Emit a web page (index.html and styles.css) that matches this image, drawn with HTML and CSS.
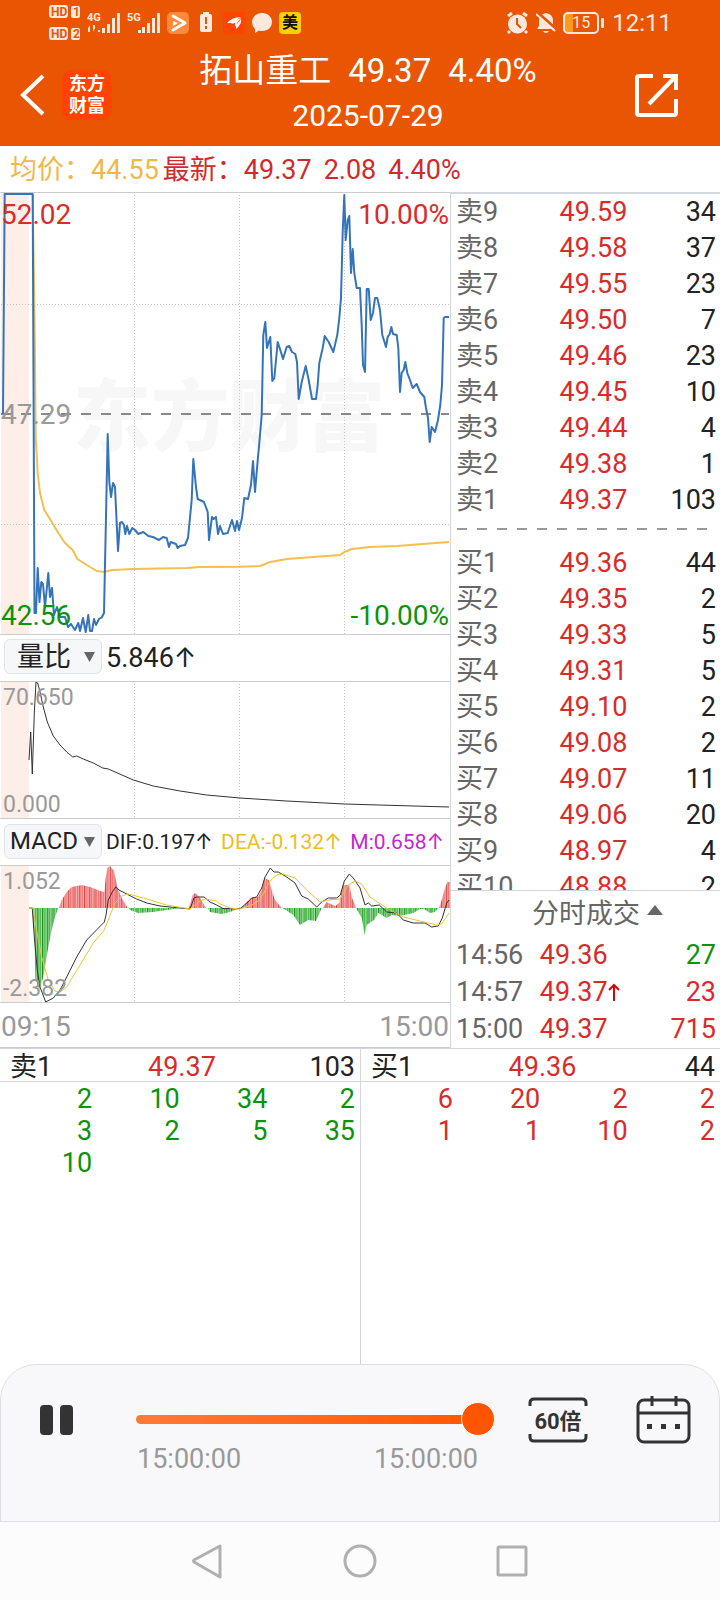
FILE: index.html
```html
<!DOCTYPE html>
<html lang="zh-CN">
<head>
<meta charset="utf-8">
<meta name="viewport" content="width=device-width, initial-scale=1">
<title>拓山重工 分时回放</title>
<link rel="stylesheet" href="styles.css">
</head>
<body>
<div class="app">
  <header class="top">
    <div class="status">
      <div class="status-left">
        <svg width="32" height="36" viewBox="0 0 32 36"><g fill="#ffe9df"><rect x="0" y="0" width="19" height="13" rx="3"/><rect x="22" y="1" width="9" height="12" rx="2"/><rect x="0" y="22" width="19" height="13" rx="3"/><rect x="22" y="23" width="9" height="12" rx="2"/></g><g class="tiny-dark"><text x="2" y="11">HD</text><text x="24" y="11">1</text><text x="2" y="33">HD</text><text x="24" y="33">2</text></g></svg>
        <svg width="34" height="22" viewBox="0 0 34 22"><text class="tiny-light" x="0" y="9">4G</text><g fill="#ffe9df"><path d="M3 13v7h-2v-4zM6 20v-7h2v3zM11 18h2v2h-2zM15 16h3v5h-3zM20 12h3v9h-3zM25 6h3v15h-3zM30 1h3v20h-3z"/></g></svg>
        <svg width="34" height="22" viewBox="0 0 34 22"><text class="tiny-light" x="0" y="9">5G</text><g fill="#ffe9df"><path d="M11 18h3v3h-3zM15 15h3v6h-3zM20 11h3v10h-3zM25 6h3v15h-3zM30 1h3v20h-3z"/></g></svg>
        <svg width="22" height="22" viewBox="0 0 22 22"><rect width="22" height="22" rx="5" fill="#ff8a3c"/><path d="M6 4l12 7-12 7" fill="none" stroke="#fff" stroke-width="3" stroke-linejoin="round" stroke-linecap="round"/><path d="M6 9l5 2-5 3z" fill="#fff"/></svg>
        <svg width="12" height="22" viewBox="0 0 12 22"><path d="M3 0h6v2h1q2 0 2 2v14q0 2-2 2H2q-2 0-2-2V4q0-2 2-2h1z" fill="#ffe9df"/><path d="M5 5h2v7H5zM5 14h2v3H5z" fill="#ea5504"/></svg>
        <svg width="22" height="22" viewBox="0 0 22 22"><rect width="22" height="22" fill="#ff4400"/><path d="M4 11q5-6 14-6-5 2-7 6zM8 12q5-5 10-6-4 4-6 9v-4zM13 17v-4q3-3 5-6 1 5-5 10z" fill="#fff"/></svg>
        <svg width="22" height="20" viewBox="0 0 22 20"><path d="M11 0c6 0 10 4 10 9s-4 9-10 9q-2 0-3-.5L4 20v-4Q1 13 1 9c0-5 4-9 10-9z" fill="#ffe9df"/></svg>
        <span class="mei">美</span>
      </div>
      <div class="status-right">
        <svg width="23" height="22" viewBox="0 0 23 22"><circle cx="11.500" cy="12" r="9.500" fill="#ffe9df"/><path d="M2 4l4-3M21 4l-4-3M4 19l-2 2M19 19l2 2" stroke="#ffe9df" stroke-width="3"/><path d="M11 6v6l4 4" stroke="#ea5504" stroke-width="2" fill="none"/></svg>
        <svg width="20" height="22" viewBox="0 0 20 22"><path d="M10 1q7 1 7 8v5l2 3H1l2-3V9q0-7 7-8zM7 19h6q-1 2-3 2t-3-2z" fill="#ffe9df"/><path d="M1 0l19 17" stroke="#ea5504" stroke-width="3"/><path d="M0 2l19 17" stroke="#ffe9df" stroke-width="2"/></svg>
        <span class="battery">15</span>
        <span class="clock">12:11</span>
      </div>
    </div>
    <div class="titlebar">
      <div class="title-left">
        <button class="icon-btn" aria-label="返回"><svg width="25" height="42" viewBox="0 0 25 42"><path d="M23 2L3 21l20 19" fill="none" stroke="#fff" stroke-width="4"/></svg></button>
        <div class="logo">东方<br>财富</div>
      </div>
      <div class="title-mid">
        <h1><span>拓山重工</span><span>49.37</span><span>4.40%</span></h1>
        <p>2025-07-29</p>
      </div>
      <button class="icon-btn share" aria-label="分享"><svg width="44" height="44" viewBox="0 0 44 44"><path d="M18 3H4q-2 0-2 2v35q0 2 2 2h35q2 0 2-2V26M28 3h13v14M41 3L14 31" fill="none" stroke="#fff" stroke-width="4"/></svg></button>
    </div>
  </header>

  <div class="info"><span class="avg">均价：44.55</span><span class="latest">最新：49.37</span><span class="delta">2.08</span><span class="delta">4.40%</span></div>

  <main class="board">
    <section class="charts">
      <div class="chart price">
        <div class="watermark" aria-hidden="true">东方财富</div>
        <svg viewBox="0 193 450 441" preserveAspectRatio="none">
          <rect class="pre" x="1" y="192" width="28" height="442"/>
          <path class="grid" d="M134.500 192V634M239.500 192V634M344.500 192V634M1 304.500H449M1 524.500H449"/>
          <path class="mid" d="M1 414H449"/>
          <polyline class="avg-line" points="32.700,194 34.700,332 35.700,437 37.700,473 40,493 44.300,510 50,519 58.300,533 65,543 72.700,550 77.300,559 86.700,565 96.700,571 104.300,572 112,570 133,569 187,568 200,567 240,566.700 260,566 270,562 287,559 340,555 345,551.700 352,549 370,547 397,546 449,542"/>
          <polyline class="price-line" points="3,414 4.700,194 32.700,194 34.500,613 36,613 37.700,568 39.500,602 41.300,582 43,584 45,607 48.300,573 50,597 52,588 54,615 57,607 60,617 65,617 68,627 71,624 75,630 78.300,623 80,631 83,618 85.700,632 88.300,615 90,631 92,631 94,619 96,625 99,619 101.700,617.500 104,613 107.700,434 109.300,482 111,497 113,483 115,487 118,551 120,523 122,522 124,525 125.300,534 127,526 129.300,534 132.300,528 135,530 138.300,534 143.300,532 148.300,536 153,537 159,540 163,537 166.700,538 169,547 170.700,542 176,544 177.700,548 180,546 185,545 188,538 191.700,500 193.300,459 196,487 197.700,499 204,502 207.700,512 209,540 212,517 213.700,519 216,517 218,534 220,526 223,534 227.700,533 232,520 235,531 237,521 239,530 242,518 244.300,498 248,499 251,485 253,461 255,492 258,457 259.300,443 261.700,415 263.300,335 265.300,322 267,348 270.300,337 272.300,381 274.300,378 277.700,342 280.300,350 283,359 286.700,347 289.300,346 292,352 295.300,354 297,362 298.700,399 301.700,382 305.700,366 308.700,380 312,399 316,399 317.700,385 319.300,363 322.700,348 324.700,336 328.700,342 333.300,352 337.300,335 339.300,318 341,298 342.700,232 344.300,195 345.700,240 347.700,220 349.300,216 351,273 352.700,249 354.300,273 356.700,288 360,288 361.700,325 363,365 365,372 366.700,289 368.700,289 370.700,320 373,313 375,298 377.300,298 380,310 382.300,335 386,347 387.700,337 389.700,334 391.300,327 393,334 396.700,335 398.300,348 400,392 401.700,373 403.700,370 405.300,362 407.300,373 410,380 412.700,388 416.700,384 420,392 424.300,397 426,408 428,418 429.700,442 431.700,427 435,432 438,420 440.300,405 442,385 443.700,318 445,317 449,317"/>
        </svg>
        <span class="lab tl red">52.02</span><span class="lab tr red">10.00%</span>
        <span class="lab ml grey">47.29</span>
        <span class="lab bl green">42.56</span><span class="lab br green">-10.00%</span>
      </div>

      <div class="bar">
        <label class="picker"><select aria-label="副图指标一"><option>量比</option></select><svg width="11" height="10" viewBox="0 0 11 10"><path d="M0 0h11L5.500 10z" fill="#666"/></svg></label>
        <span class="big">5.846<i>↑</i></span>
      </div>

      <div class="chart sub">
        <svg viewBox="0 682 450 136" preserveAspectRatio="none">
          <rect class="pre" x="1" y="681" width="28" height="137"/>
          <path class="grid" d="M134.500 681V818M239.500 681V818M344.500 681V818"/>
          <polyline class="dark-line" points="29,760 30.700,732 32.300,774 34.300,713 36,682 37.700,683 40,692 43.300,707 47.300,722 53.300,736 60,745 66.700,752 72.700,757 76.700,756 83.300,759 93.300,763 102.700,768 108.300,769 133.300,780 153.300,786 180,791 206.700,795 240,798 286.700,801 344.300,804 449,807"/>
        </svg>
        <span class="lab tl small grey">70.650</span><span class="lab bl small grey">0.000</span>
      </div>

      <div class="bar">
        <label class="picker narrow"><select aria-label="副图指标二"><option>MACD</option></select><svg width="11" height="10" viewBox="0 0 11 10"><path d="M0 0h11L5.500 10z" fill="#666"/></svg></label>
        <div class="macd"><span>DIF:0.197<i>↑</i></span><span class="gold">DEA:-0.132<i>↑</i></span><span class="violet">M:0.658<i>↑</i></span></div>
      </div>

      <div class="chart sub">
        <svg viewBox="0 866 450 136" preserveAspectRatio="none">
          <defs>
            <pattern id="up" width="5.250" height="200" patternUnits="userSpaceOnUse"><rect width="5.250" height="200" fill="#ffc4c4"/><path d="M.600 0V200" stroke="#b84545" stroke-width="1.100"/><path d="M2.300 0V200M4 0V200" stroke="#ff6e6e" stroke-width="1.100"/></pattern>
            <pattern id="down" width="5.250" height="200" patternUnits="userSpaceOnUse"><rect width="5.250" height="200" fill="#bdeabd"/><path d="M.600 0V200" stroke="#18811e" stroke-width="1.100"/><path d="M2.300 0V200M4 0V200" stroke="#41bd41" stroke-width="1.100"/></pattern>
          </defs>
          <rect class="pre" x="1" y="865" width="28" height="137"/>
          <path class="grid" d="M134.500 865V1002M239.500 865V1002M344.500 865V1002"/>
          <path fill="url(#up)" d="M59 908L61.700 900 66.700 892 71.700 887 81.700 885 90 887 100 891 104.300 892 105.700 878 107.300 868 110 866 114 871 117.300 887 121.700 898 127.700 908ZM189 908L192.700 895 195.300 893 200 898 206 908ZM241.700 908L246.700 902 251.700 898 258 897 261.700 890 264.300 878 269 880 272.300 892 275 900 281.700 908ZM322.700 908L326.700 902 335 906 339.300 903 342.700 885 349.300 885 351.700 897 355 905 356 908ZM439 908L441.700 900 445 888 447.300 882H450V908Z"/>
          <path fill="url(#down)" d="M32 908L34.300 933 35.300 978 39.300 990 43.300 977 48.300 947 51.700 930 55 917 58.300 908ZM129 908L130 910 138 913 153 912 167 910 180 908ZM208 908L210 912 221.700 914 230 912 240 908ZM282.700 908L293.300 915 300 925 308.300 920 316 921 320 912 321.700 908ZM356 908L361.700 918 364.700 935 366.700 925 374 920 378.300 913 386.700 918 391.700 915 400 916 413.300 913 420 909 424 909 430 913 435 912 438.300 908Z"/>
          <polyline class="dark-line" points="29,908 32.300,908 34.300,937 37.300,970 40,987 45.700,1002 53.300,998 60,990 66.700,977 76.700,957 86.700,940 104.300,922 106,915 108.300,900 111.700,893 115.700,887 119,890 126.700,894 136.700,899 146.700,903 160,906 190,909 194,898 196.700,897 204,897 210,902 216.700,905 223,908.500 240,908.700 248,902 251.700,898 256.700,897 261.700,888 265,877 270.300,868 274,872 278.300,872 286.700,877 295,883 301.700,896 308.300,899 316.700,907 321.700,902 328.300,898 336.700,898 340.300,895 344.300,881 349.300,874 353.300,878 360,888 365,905 368.300,903 371.700,906 379.300,905 386.700,912 396.700,913 403.300,920 413.300,923 425,923 431.700,927 438.300,926 442.300,918 446.700,903 449,900"/>
          <polyline class="gold-line" points="29,908 33,908 35.300,923 41.700,957 48.300,980 55,991 60,992 66.700,987 80,965 93.300,943 104.300,930 108.300,920 115,903 121.700,896 128.300,894 140,897 166.700,905 190,909 200,901 205.700,899 216.700,901 220,904 230,908 240,909 251.700,905 260,900 270,881 276.700,875 283.300,874 295,878 306.700,890 320,902 328.300,900 340,899 348.300,885 355,881 361.700,884 370,897 386.700,908 403.300,917 420,921 436.700,925 441.700,924 449,913"/>
        </svg>
        <span class="lab tl small grey">1.052</span><span class="lab bl small grey">-2.382</span>
      </div>
      <div class="axis"><span>09:15</span><span>15:00</span></div>
    </section>

    <section class="quotes">
      <table class="levels">
        <tr><th>卖9</th><td>49.59</td><td>34</td></tr>
        <tr><th>卖8</th><td>49.58</td><td>37</td></tr>
        <tr><th>卖7</th><td>49.55</td><td>23</td></tr>
        <tr><th>卖6</th><td>49.50</td><td>7</td></tr>
        <tr><th>卖5</th><td>49.46</td><td>23</td></tr>
        <tr><th>卖4</th><td>49.45</td><td>10</td></tr>
        <tr><th>卖3</th><td>49.44</td><td>4</td></tr>
        <tr><th>卖2</th><td>49.38</td><td>1</td></tr>
        <tr><th>卖1</th><td>49.37</td><td>103</td></tr>
      </table>
      <div class="split"></div>
      <div class="buys">
        <table class="levels">
          <tr><th>买1</th><td>49.36</td><td>44</td></tr>
          <tr><th>买2</th><td>49.35</td><td>2</td></tr>
          <tr><th>买3</th><td>49.33</td><td>5</td></tr>
          <tr><th>买4</th><td>49.31</td><td>5</td></tr>
          <tr><th>买5</th><td>49.10</td><td>2</td></tr>
          <tr><th>买6</th><td>49.08</td><td>2</td></tr>
          <tr><th>买7</th><td>49.07</td><td>11</td></tr>
          <tr><th>买8</th><td>49.06</td><td>20</td></tr>
          <tr><th>买9</th><td>48.97</td><td>4</td></tr>
          <tr><th>买10</th><td>48.88</td><td>2</td></tr>
        </table>
      </div>
      <div class="trades">
        <button class="trades-head">分时成交<svg width="16" height="10" viewBox="0 0 16 10"><path d="M8 0l8 10H0z" fill="#666"/></svg></button>
        <table>
          <tr><th>14:56</th><td>49.36</td><td class="green">27</td></tr>
          <tr><th>14:57</th><td>49.37<svg width="12" height="18" viewBox="0 0 12 18"><path d="M6 18V2M1 7l5-5 5 5" fill="none" stroke="#d00" stroke-width="2"/></svg></td><td>23</td></tr>
          <tr><th>15:00</th><td>49.37</td><td>715</td></tr>
        </table>
      </div>
    </section>
  </main>

  <section class="orders">
    <div class="side">
      <div class="side-head"><span>卖1</span><span class="red">49.37</span><span>103</span></div>
      <table class="green">
        <tr><td>2</td><td>10</td><td>34</td><td>2</td></tr>
        <tr><td>3</td><td>2</td><td>5</td><td>35</td></tr>
        <tr><td>10</td><td></td><td></td><td></td></tr>
      </table>
    </div>
    <div class="side">
      <div class="side-head"><span>买1</span><span class="red">49.36</span><span>44</span></div>
      <table class="red">
        <tr><td>6</td><td>20</td><td>2</td><td>2</td></tr>
        <tr><td>1</td><td>1</td><td>10</td><td>2</td></tr>
      </table>
    </div>
  </section>

  <section class="player">
    <button class="icon-btn" aria-label="暂停"><svg width="33" height="48" viewBox="0 0 33 48"><rect x="0" y="9" width="13" height="30" rx="4" fill="#333"/><rect x="20" y="9" width="13" height="30" rx="4" fill="#333"/></svg></button>
    <div class="seek">
      <input type="range" min="0" max="100" value="100" aria-label="回放进度">
      <div class="times"><span>15:00:00</span><span>15:00:00</span></div>
    </div>
    <button class="icon-btn speed"><svg width="60" height="48" viewBox="0 0 60 48" aria-hidden="true"><path d="M2 10V7q0-4 4-4h48q4 0 4 4v3M2 38v3q0 4 4 4h48q4 0 4-4v-3" fill="none" stroke="#333" stroke-width="3"/></svg><span>60倍</span></button>
    <button class="icon-btn" aria-label="选择日期"><svg width="55" height="48" viewBox="0 0 55 48"><g fill="none" stroke="#333" stroke-width="3"><rect x="2" y="4" width="51" height="42" rx="6"/><path d="M2 17h51M16 0v10M40 0v10"/></g><path d="M11 28h5v5h-5zM25 28h5v5h-5zM39 28h5v5h-5z" fill="#333"/></svg></button>
  </section>

  <nav class="sysnav">
    <button class="icon-btn" aria-label="系统返回"><svg width="36" height="36" viewBox="0 0 36 36"><path d="M30 3v31L4 19q-1-1 0-2z" fill="none" stroke="#b0b0b0" stroke-width="3" stroke-linejoin="round"/></svg></button>
    <button class="icon-btn" aria-label="主屏幕"><svg width="36" height="36" viewBox="0 0 36 36"><circle cx="18" cy="18" r="15" fill="none" stroke="#b0b0b0" stroke-width="3"/></svg></button>
    <button class="icon-btn" aria-label="最近任务"><svg width="36" height="36" viewBox="0 0 36 36"><rect x="4" y="4" width="28" height="28" rx="1" fill="none" stroke="#b0b0b0" stroke-width="3"/></svg></button>
  </nav>
</div>
</body>
</html>
```
FILE: styles.css
```css
* { box-sizing: border-box; }
body {
  margin: 0;
  background: #fff;
  color: #222;
  font: 27px/36px Roboto, "Noto Sans CJK SC", sans-serif;
}
.app { min-height: 100vh; display: flex; flex-direction: column; }
svg { display: block; flex: none; }
button, select { font: inherit; color: inherit; }
.icon-btn { display: block; padding: 0; border: 0; background: none; }
table { border-collapse: collapse; width: 100%; table-layout: fixed; }
th, td { padding: 0; font-weight: 400; white-space: nowrap; }
.red { color: #d82c2c; }
.green { color: #0c930c; }
.grey { color: #999; }
.gold { color: #ebbd27; }
.violet { color: #c526cb; }

/* header */
.top { background: #ea5504; color: #fff; }
.status {
  height: 46px;
  padding: 0 48px 0 49px;
  display: flex;
  align-items: center;
  justify-content: space-between;
  color: #ffe9df;
}
.status-left { display: flex; align-items: center; gap: 6px; }
.status-left svg:nth-child(4),
.status-left svg:nth-child(5) { margin-right: 5px; }
.status-right { display: flex; align-items: center; gap: 7px; }
.tiny-dark { font: 700 12px Roboto, sans-serif; fill: #ea5504; }
.tiny-light { font: 700 11px Roboto, sans-serif; fill: #ffe9df; }
.mei {
  width: 22px;
  height: 22px;
  border-radius: 4px;
  background: #ffd000;
  color: #111;
  font-weight: 700;
  font-size: 16px;
  line-height: 22px;
  text-align: center;
}
.battery {
  position: relative;
  width: 36px;
  height: 22px;
  margin-right: 6px;
  border: 2px solid #ffe9df;
  border-radius: 5px;
  background: linear-gradient(90deg, #ff9a1c 8px, transparent 8px);
  font-size: 16px;
  line-height: 18px;
  text-align: center;
}
.battery::after {
  content: "";
  position: absolute;
  right: -7px;
  top: 4px;
  width: 3px;
  height: 10px;
  border-radius: 1px;
  background: #ffe9df;
}
.clock { font-size: 24px; }
.titlebar {
  height: 100px;
  display: grid;
  grid-template-columns: 112px 1fr 96px;
}
.title-left { padding: 24px 0 0 20px; display: flex; align-items: flex-start; justify-content: space-between; }
.title-left .icon-btn { margin-top: 4px; }
.logo {
  width: 50px;
  height: 50px;
  padding-top: 3px;
  border-radius: 10px;
  background: #ff4400;
  font-size: 18px;
  font-weight: 700;
  line-height: 22px;
  text-align: center;
}
.title-mid { text-align: center; }
h1 {
  margin: 0;
  display: flex;
  justify-content: center;
  gap: 17px;
  font-size: 33px;
  font-weight: 400;
  line-height: 50px;
}
.title-mid p { margin: 0; font-size: 30px; line-height: 40px; }
.share { padding: 27px 0 0 11px; align-self: start; }

.info {
  height: 46px;
  padding-left: 10px;
  display: flex;
  gap: 4px;
  line-height: 48px;
  white-space: nowrap;
}
.avg { color: #f0b84a; }
.latest, .delta { color: #cf2b2e; }
.delta { margin-left: 8px; }

/* charts */
.board { display: grid; grid-template-columns: 5fr 3fr; }
.charts { min-width: 0; }
.chart { position: relative; border-top: 1px solid #ccc; border-bottom: 1px solid #ccc; }
.chart > svg { position: relative; width: 100%; height: 100%; }
.price { height: 443px; }
.sub { height: 138px; }
.pre { fill: #fdeee8; }
.grid { fill: none; stroke: #c4c4c4; stroke-width: 1; stroke-dasharray: 1 2; }
.mid { stroke: #888; stroke-width: 2; stroke-dasharray: 10 10; }
.avg-line, .price-line, .dark-line, .gold-line { fill: none; stroke-linejoin: round; vector-effect: non-scaling-stroke; }
.avg-line { stroke: #f3bf4f; stroke-width: 2; }
.price-line { stroke: #3574b8; stroke-width: 2; }
.dark-line { stroke: #333; stroke-width: 1; }
.gold-line { stroke: #ecc53a; stroke-width: 1; }
.watermark {
  position: absolute;
  inset: 10px 0 0 8px;
  display: grid;
  place-items: center;
  color: #f7f7f7;
  font-size: 78px;
  font-weight: 900;
  line-height: 80px;
}
.lab { position: absolute; font-size: 28px; line-height: 32px; }
.lab.small { font-size: 23px; }
.tl { left: 1px; top: 6px; }
.tr { right: 1px; top: 6px; }
.ml { left: 1px; top: 206px; }
.bl { left: 1px; bottom: 2px; }
.br { right: 1px; bottom: 2px; }
.small.tl { left: 3px; top: 0; }
.small.bl { left: 3px; bottom: -3px; }
.bar {
  height: 46px;
  padding-left: 4px;
  display: flex;
  align-items: center;
  gap: 4px;
  font-size: 21px;
  white-space: nowrap;
}
.bar i { font-family: Inter, sans-serif; font-style: normal; }
.macd { flex: 1; display: flex; justify-content: space-between; padding-right: 6px; }
.big { font-size: 27px; }
.picker { position: relative; width: 98px; flex: none; }
.picker select {
  width: 100%;
  height: 35px;
  padding: 0 18px 0 0;
  border: 1px solid #e0e3e8;
  border-radius: 6px;
  background: #f6f7f9;
  appearance: none;
  font-size: 27px;
  line-height: 32px;
  text-align-last: center;
}
.picker.narrow select { font-size: 24px; }
.bar .picker svg { position: absolute; right: 7px; top: 13px; pointer-events: none; }
.axis {
  height: 45px;
  padding: 0 1px 0 1px;
  display: flex;
  justify-content: space-between;
  border-bottom: 1px solid #ccc;
  color: #999;
  font-size: 28px;
  line-height: 47px;
}

/* order book */
.quotes {
  display: flex;
  flex-direction: column;
  border-left: 1px solid #d3d6dc;
  border-top: 2px solid #d3d6dc;
}
.levels th, .trades th { text-align: left; padding-left: 5px; color: #666; }
.levels td:nth-child(2), .trades td { color: #d82c2c; }
.levels th { width: 40%; }
.levels td:nth-child(2) { width: 30%; padding-left: 1px; }
.levels td:last-child, .trades td:last-child { text-align: right; padding-right: 4px; }
.trades td.green { color: #0c930c; }
.split {
  height: 27px;
  margin: 0 12px 0 6px;
  flex: none;
  background: repeating-linear-gradient(90deg, #999 0 10px, transparent 10px 20px) 0 10px / 100% 2px no-repeat;
}
.buys { flex: 1 1 0; height: 0; min-height: 0; overflow: hidden; }
.trades { border-top: 1px solid #d3d6dc; }
.trades-head {
  width: 100%;
  height: 46px;
  padding: 0 0 0 24px;
  border: 0;
  background: none;
  display: flex;
  align-items: center;
  justify-content: center;
  gap: 7px;
  color: #666;
}
.trades-head svg { margin-bottom: 8px; }
.trades table { line-height: 37px; }
.trades th { width: 33%; }
.trades td:nth-child(2) { width: 37%; }
.trades td svg { display: inline-block; }

/* matching order queues */
.orders { flex: 1; display: grid; grid-template-columns: 1fr 1fr; border-top: 1px solid #d3d6dc; }
.side + .side { border-left: 1px solid #d3d6dc; }
.side-head {
  height: 33px;
  padding: 0 5px 0 10px;
  display: grid;
  grid-template-columns: 40% 1fr auto;
  border-bottom: 1px solid #d3d6dc;
  line-height: 36px;
}
.side table { line-height: 32px; margin-top: 1px; }
.side td { text-align: right; padding-right: 5px; }
.side td:first-child { width: 27%; }

/* playback panel */
.player {
  height: 158px;
  padding: 31px 28px 0 39px;
  display: flex;
  align-items: flex-start;
  border: 1px solid #dedfe2;
  border-radius: 36px 36px 0 0;
  background: #f8f8fa;
}
.seek { flex: 1; margin: 7px 33px 0 63px; }
.seek input {
  display: block;
  width: 100%;
  height: 32px;
  margin: 0;
  appearance: none;
  background: none;
}
.seek input::-webkit-slider-runnable-track {
  height: 9px;
  border-radius: 5px;
  background: linear-gradient(90deg, #ff7a38, #ff5500);
}
.seek input::-webkit-slider-thumb {
  appearance: none;
  width: 34px;
  height: 34px;
  margin-top: -13px;
  border: 1px solid #fff;
  border-radius: 50%;
  background: #ff5500;
}
.times {
  padding: 8px 17px 0 1px;
  display: flex;
  justify-content: space-between;
  color: #999;
  line-height: 32px;
}
.speed { display: grid; place-items: center; margin-right: 48px; }
.speed > * { grid-area: 1 / 1; }
.speed span { padding-top: 3px; color: #333; font-size: 22px; font-weight: 700; line-height: 24px; }

.sysnav {
  height: 78px;
  display: flex;
  align-items: center;
  justify-content: center;
  gap: 116px;
  background: #fcfcfc;
}
```
